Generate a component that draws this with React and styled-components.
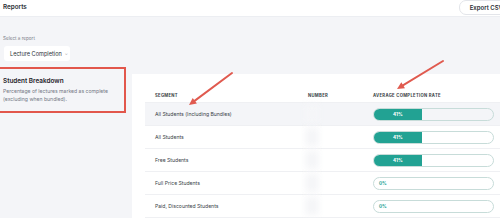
import React from 'react'
import styled, { createGlobalStyle } from 'styled-components'

const Global = createGlobalStyle`
  body {
    margin: 0;
    background: #f4f5f8;
    font-family: Inter, "Noto Sans", sans-serif;
    color: #2b2f36;
  }
`;

const Page = styled.div`
  position: relative;
  width: 500px;
  height: 218px;
  overflow: hidden;
`;

const Header = styled.div`
  height: 16px;
  background: #fff;
  border-bottom: 1px solid #eceef2;
  display: flex;
  align-items: center;
  justify-content: space-between;
  padding-left: 3px;
`;

const Title = styled.div`
  font-size: 6.3px;
  font-weight: 600;
  margin-top: -3px;
`;

const ExportButton = styled.div`
  height: 13px;
  margin-top: -2px;
  margin-right: -16px;
  padding: 0 12px 0 10px;
  border: 1px solid #e3e5ea;
  border-radius: 7px;
  display: flex;
  align-items: center;
  font-size: 6px;
  font-weight: 600;
  white-space: nowrap;
`;

const Picker = styled.div`
  padding: 19px 4px 0 4px;
`;

const PickerLabel = styled.div`
  font-size: 4.6px;
  color: #7b808a;
  margin-left: -1px;
`;

const Dropdown = styled.div`
  margin-top: 5px;
  width: 66px;
  height: 15px;
  background: #fff;
  border-radius: 3px;
  display: flex;
  align-items: center;
  padding-left: 6px;
  box-sizing: border-box;
  font-size: 5.6px;
  gap: 3px;
`;

const Caret = styled.span`
  font-size: 4px;
  color: #999;
`;

const Body = styled.div`
  display: flex;
  align-items: flex-start;
  margin-top: 6px;
`;

const InfoBox = styled.div`
  width: 126px;
  height: 46px;
  box-sizing: border-box;
  border: 2px solid #e2574c;
  border-left: none;
  padding: 8px 0 0 3px;
`;

const InfoTitle = styled.div`
  font-size: 6.4px;
  font-weight: 600;
  color: #1f2329;
`;

const InfoText = styled.div`
  margin-top: 2px;
  font-size: 5.1px;
  line-height: 8px;
  color: #737884;
`;

const Card = styled.div`
  margin-left: 6px;
  margin-top: 7px;
  flex: 1;
  height: 150px;
  background: #fff;
  padding: 14px 0 0 13px;
`;

const Row = styled.div`
  display: grid;
  grid-template-columns: 153px 65px 121px;
  align-items: center;
  height: ${p => (p.$head ? '15px' : '23px')};
  background: ${p => (p.$active ? '#f4f5f8' : 'transparent')};
  border-bottom: 1px solid #eff0f3;
  box-sizing: border-box;
  padding-left: 10px;
`;

const HeadCell = styled.div`
  font-size: 4.2px;
  font-weight: 700;
  letter-spacing: 0.3px;
  color: #3a3f47;
`;

const Cell = styled.div`
  font-size: 5.1px;
  color: #3a3f47;
`;

const Blur = styled.div`
  width: 14px;
  height: 18px;
  margin-left: -3px;
  background: #f5f6f8;
  filter: blur(3px);
`;

const Bar = styled.div`
  height: 13px;
  border: 1px solid #c7dcd9;
  border-radius: 7px;
  box-sizing: border-box;
  overflow: hidden;
  display: flex;
`;

const Fill = styled.div`
  background: #22a293;
  height: 100%;
  display: flex;
  align-items: center;
  justify-content: ${p => (p.$empty ? 'flex-start' : 'center')};
  padding-left: ${p => (p.$empty ? '5px' : '0')};
  font-size: 4.6px;
  font-weight: 700;
  color: ${p => (p.$empty ? '#22a293' : '#fff')};
  ${p => p.$empty && 'background: transparent;'}
`;

const Arrows = styled.svg`
  position: absolute;
  left: 0;
  top: 0;
  pointer-events: none;
`;

const rows = [
  { name: 'All Students (Including Bundles)', rate: 41, active: true },
  { name: 'All Students', rate: 41 },
  { name: 'Free Students', rate: 41 },
  { name: 'Full Price Students', rate: 0 },
  { name: 'Paid, Discounted Students', rate: 0 },
];

function Arrow({ x1, y1, x2, y2 }) {
  const a = Math.atan2(y2 - y1, x2 - x1);
  const l = 8, w = 0.45;
  const p1 = [x2 - l * Math.cos(a - w), y2 - l * Math.sin(a - w)];
  const p2 = [x2 - l * Math.cos(a + w), y2 - l * Math.sin(a + w)];
  return (
    <g>
      <line x1={x1} y1={y1} x2={x2 - 4 * Math.cos(a)} y2={y2 - 4 * Math.sin(a)} stroke="#e05a4f" strokeWidth="2" strokeLinecap="round" />
      <polygon points={`${x2},${y2} ${p1[0]},${p1[1]} ${p2[0]},${p2[1]}`} fill="#e05a4f" />
    </g>
  );
}

export default function App() {
  return (
    <Page>
      <Global />
      <Header>
        <Title>Reports</Title>
        <ExportButton>Export CSV</ExportButton>
      </Header>
      <Picker>
        <PickerLabel>Select a report</PickerLabel>
        <Dropdown>Lecture Completion <Caret>⌄</Caret></Dropdown>
      </Picker>
      <Body>
        <InfoBox>
          <InfoTitle>Student Breakdown</InfoTitle>
          <InfoText>
            Percentage of lectures marked as complete<br />(excluding when bundled).
          </InfoText>
        </InfoBox>
        <Card>
          <Row $head>
            <HeadCell>SEGMENT</HeadCell>
            <HeadCell>NUMBER</HeadCell>
            <HeadCell>AVERAGE COMPLETION RATE</HeadCell>
          </Row>
          {rows.map(r => (
            <Row key={r.name} $active={r.active}>
              <Cell>{r.name}</Cell>
              <Blur />
              <Bar>
                {r.rate > 0 ? (
                  <Fill style={{ width: '40%' }}>{r.rate}%</Fill>
                ) : (
                  <Fill $empty>0%</Fill>
                )}
              </Bar>
            </Row>
          ))}
        </Card>
      </Body>
      <Arrows width="500" height="218">
        <Arrow x1={232} y1={73} x2={189} y2={105} />
        <Arrow x1={443} y1={61} x2={397} y2={89} />
      </Arrows>
    </Page>
  );
}
